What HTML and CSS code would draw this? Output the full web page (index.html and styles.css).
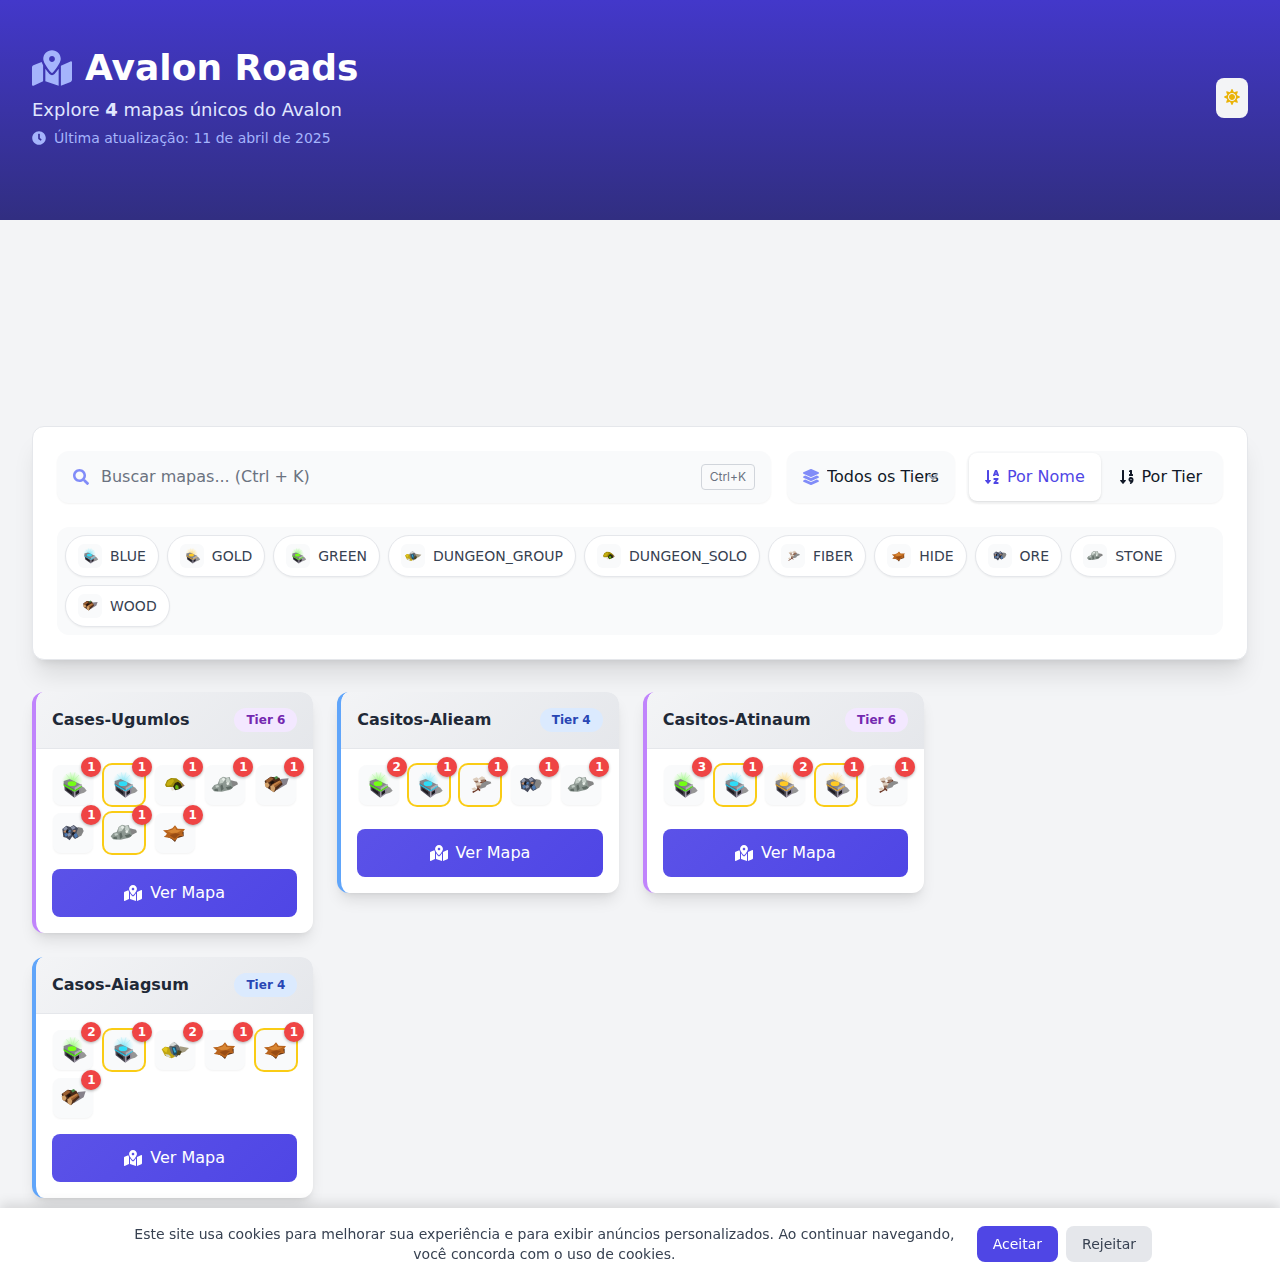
FILE: index.html
```html
<!DOCTYPE html>
<html lang="pt-BR">
<head>
<meta charset="utf-8">
<meta name="viewport" content="width=device-width, initial-scale=1">
<title>Avalon Roads</title>
<link rel="stylesheet" href="styles.css">
</head>
<body>
<svg class="sprite" aria-hidden="true">
  <defs>
    <radialGradient id="glow-green"><stop offset="0" stop-color="#5dff1e" stop-opacity=".6"/><stop offset="1" stop-color="#8dff6a" stop-opacity="0"/></radialGradient>
    <radialGradient id="glow-blue"><stop offset="0" stop-color="#25d8f5" stop-opacity=".6"/><stop offset="1" stop-color="#7be9ff" stop-opacity="0"/></radialGradient>
    <radialGradient id="glow-gold"><stop offset="0" stop-color="#ffc21e" stop-opacity=".6"/><stop offset="1" stop-color="#ffdc7a" stop-opacity="0"/></radialGradient>
    <g id="chest-body">
      <path fill="#969696" d="M78 88 84 62l10 6 7 9-8 6z"/>
      <path fill="#4a4853" d="M34 60 64 80v18L35 76z"/>
      <path fill="#8a8494" d="M64 78 84 66l-3 20-17 12z"/>
      <path fill="#1d1b20" d="M68 81l10-6v9l-10 7zM40 69l18 12v8L40 76z"/>
      <path fill="#85858b" d="M32 48 50 42 87 60 65 74 32 56z"/>
      <path fill="#b0afb6" d="M65 68 84 57l4 4-23 14z"/>
      <path fill="#66656d" d="M32 55 65 73v6L33 62z"/>
    </g>
  </defs>
  <symbol id="map" viewBox="0 0 576 512"><path d="M288 0c-69.59 0-126 56.41-126 126 0 56.26 82.35 158.8 113.9 196.02 6.39 7.54 17.82 7.54 24.2 0C331.65 284.8 414 182.26 414 126 414 56.41 357.59 0 288 0zm0 168c-23.2 0-42-18.8-42-42s18.8-42 42-42 42 18.8 42 42-18.8 42-42 42zM20.12 215.95A32.006 32.006 0 0 0 0 245.66v250.32c0 11.32 11.43 19.06 21.94 14.86L160 448V214.92c-8.84-15.98-16.07-31.54-21.25-46.42L20.12 215.95zM288 359.67c-14.07 0-27.38-6.18-36.51-16.96-19.66-23.2-40.57-49.62-59.49-76.72v182l192 64V266c-18.92 27.09-39.82 53.52-59.49 76.72-9.13 10.77-22.44 16.95-36.51 16.95zm266.06-198.51L416 224v288l139.88-55.95A31.996 31.996 0 0 0 576 426.34V176.02c0-11.32-11.43-19.06-21.94-14.86z"/></symbol>

  <symbol id="green" viewBox="0 0 120 120">
    <ellipse cx="58" cy="48" rx="32" ry="28" fill="url(#glow-green)"/>
    <path stroke="#a9f79a" stroke-width="2" opacity=".6" d="M56 48 40 28M57 46 52 22M59 46 66 22M61 48 78 30"/>
    <use href="#chest-body"/>
    <path fill="#4fe010" d="M32 57 64 75v5L32 62zM65 75 86 62v4L65 80z"/><ellipse cx="57" cy="56" rx="13" ry="7" fill="#73ff14"/>
  </symbol>
  <symbol id="blue" viewBox="0 0 120 120">
    <ellipse cx="58" cy="48" rx="32" ry="28" fill="url(#glow-blue)"/>
    <path stroke="#a5ecf8" stroke-width="2" opacity=".6" d="M56 48 40 28M57 46 52 22M59 46 66 22M61 48 78 30"/>
    <use href="#chest-body"/>
    <path fill="#19c3e6" d="M32 57 64 75v4L32 61zM65 75 86 62v3L65 79z"/><ellipse cx="57" cy="56" rx="13" ry="7" fill="#2fdcf7"/>
  </symbol>
  <symbol id="gold" viewBox="0 0 120 120">
    <ellipse cx="58" cy="48" rx="32" ry="28" fill="url(#glow-gold)"/>
    <path stroke="#ffe3a0" stroke-width="2" opacity=".6" d="M56 48 40 28M57 46 52 22M59 46 66 22M61 48 78 30"/>
    <use href="#chest-body"/>
    <path fill="#e2a01c" d="M32 57 64 75v4L32 61zM65 75 86 62v3L65 79z"/><ellipse cx="57" cy="56" rx="13" ry="7" fill="#ffca24"/>
  </symbol>
  <symbol id="group" viewBox="0 0 120 120">
    <path fill="#a49c82" d="M62 80 74 49l28 5-12 11-13 5z"/>
    <path fill="#bfa514" d="M20 58 30 50l14 2 8 16 8 12-10 5-20-8z"/>
    <path fill="#e2c51c" d="M22 58l10-8 6 6-4 12z"/>
    <path fill="#6a6d6e" d="M42 50 58 36l14 12 6 18-14 16-16-12z"/>
    <path fill="#d5d8d6" d="M42 46 56 35l10 8-12 6zM30 72l12 2 6 8-12-2z"/>
    <path fill="#1b4c66" d="M50 52 62 50 68 72 56 76z"/>
    <path fill="#37a9d5" d="M53 54 58 53 64 67 58 68z"/>
    <path fill="#4c4520" d="M68 60 80 64 75 76 64 75z"/>
  </symbol>
  <symbol id="solo" viewBox="0 0 120 120">
    <path fill="#8d6a58" d="M70 46l12 8 7 8-8 5-12-2z"/>
    <path fill="#a08c08" d="M30 60 36 46 48 39 64 40 78 50 83 63 70 64 62 62 58 66 44 66 34 66z"/>
    <path fill="#c5ae10" d="M34 57 41 46 54 42 57 48 49 59 38 63z"/>
    <path fill="#2b280c" d="M54 66 60 54 69 50 77 56 82 67 72 73 60 76z"/>
    <path fill="#64b20f" d="M60 66 63 59 70 62 71 72 62 73z"/>
    <path fill="#e6e0cf" d="M46 68l8-3 4 10-7 2z"/>
  </symbol>
  <symbol id="fiber" viewBox="0 0 120 120">
    <path fill="#8c8c8c" d="M54 68 72 46l20 4 2 5-14 6-4 6-14 4z"/>
    <path fill="none" stroke="#6f3b2b" stroke-width="5" d="M38 82 54 72 52 58 78 46M54 70l6 7"/>
    <path fill="#ddcdbd" d="M38 42 50 37 57 42 54 49 43 50zM56 40 66 34 75 38 74 46 62 49zM46 55 58 50 65 56 60 65 50 65zM34 71 44 67 51 73 43 78z"/>
    <path fill="#94705c" d="M42 48l12-1 2 5-8 2zM62 45l12-2 2 6-10 4zM50 62l12-1-2 7-8 2z"/>
  </symbol>
  <symbol id="hide" viewBox="0 0 120 120">
    <path fill="#5d3115" d="M26 72 38 72 50 78 60 87 66 76 86 70 86 56 66 52z"/>
    <path fill="#b9641d" d="M24 52 38 51 52 46 60 37 68 47 90 48 82 59 85 69 72 70 60 83 48 76 28 72 36 62z"/>
    <path fill="#d98632" d="M36 54 52 50 60 42 64 51 80 52 66 59 48 60z"/>
    <path fill="#984c14" d="M44 66 62 61 76 63 68 68 60 77 50 71z"/>
  </symbol>
  <symbol id="ore" viewBox="0 0 120 120">
    <path fill="#858585" d="M60 73 74 42l14 3 4 9-7 14-14 6z"/>
    <path fill="#454a5a" d="M28 48 40 38 52 42 62 36 75 46 70 60 77 72 66 78 58 70 50 82 40 74 31 72z"/>
    <path fill="#8b93a8" d="M30 47 40 40 44 48 36 54zM53 43l9-5 6 7-10 5zM42 63l9-4 4 7-9 5z"/>
    <path fill="#4f7bb3" d="M62 64 70 60 75 70 67 76zM34 62l8-2 2 8-7 3zM47 50l7 2-2 7-7-2z"/>
    <path fill="#bd8a68" d="M31 55l9-4 3 5-7 4zM58 53l8-3 3 4-6 4z"/>
    <path fill="#181b24" d="M42 49l5 2-3 9-6-2zM56 64l4-7 6 3-5 7z"/>
  </symbol>
  <symbol id="stone" viewBox="0 0 120 120">
    <path fill="#858585" d="M70 76 78 46l18 4 3 8-14 7-7 8z"/>
    <path fill="#8c9791" d="M20 70 28 60 38 57 44 42 54 35 65 38 74 36 80 54 84 68 72 75 50 80 27 79z"/>
    <path fill="#c3cdc6" d="M44 44 54 37 62 42 54 53 43 56zM64 40l8-2 4 14-8 4-5-6zM31 62l9-2 2 6-9 2z"/>
    <path fill="#e6ece7" d="M50 42l6-4 5 5-6 6zM64 54l6-3 4 7-8 3z"/>
    <path fill="#5f6b65" d="M46 62 52 58 56 72 48 78zM62 67l16-4 4 6-14 5zM28 72l10-1 2 8-11-1z"/>
  </symbol>
  <symbol id="wood" viewBox="0 0 120 120">
    <path fill="#86818a" d="M62 76 74 42l24-2-6 18-14 8z"/>
    <path fill="#4a2a18" d="M26 48 44 35 70 38 80 58 54 82 30 66z"/>
    <path fill="#9a5e2f" d="M28 47 44 36 53 41 36 54zM46 60 72 46 78 52 55 70z"/>
    <path fill="#c28045" d="M49 59 70 47 74 50 52 64z"/>
    <path fill="#d1a069" d="M26 54l9-2 6 8-5 9-8-4zM43 63l9-3 6 9-4 13-10-6z"/>
    <path fill="#1e120c" d="M42 52l8-5 6 4-10 8z"/>
    <path fill="#4b8a4a" d="M54 37l9-4 4 5-8 6z"/>
  </symbol>
</svg>

<header class="hero">
  <div class="hero-inner">
    <div class="hero-text">
      <h1 class="hero-title"><svg class="icon-title" aria-hidden="true"><use href="#map"/></svg>Avalon Roads</h1>
      <p class="hero-lead">Explore <strong>4</strong> mapas únicos do Avalon</p>
      <p class="hero-date">
        <svg class="icon-clock" viewBox="0 0 512 512" aria-hidden="true"><path d="M256,8C119,8,8,119,8,256S119,504,256,504,504,393,504,256,393,8,256,8Zm92.49,313h0l-20,25a16,16,0,0,1-22.49,2.5h0l-67-49.72a40,40,0,0,1-15-31.23V112a16,16,0,0,1,16-16h32a16,16,0,0,1,16,16V256l58,42.5A16,16,0,0,1,348.49,321Z"/></svg>
        Última atualização: 11 de abril de 2025
      </p>
    </div>
    <button class="theme-toggle" type="button" aria-label="Alternar tema">
      <svg class="icon" viewBox="0 0 512 512" aria-hidden="true"><path d="M256 160c-52.9 0-96 43.1-96 96s43.1 96 96 96 96-43.1 96-96-43.1-96-96-96zm246.4 80.5l-94.7-47.3 33.5-100.4c4.5-13.6-8.4-26.5-21.9-21.9l-100.4 33.5-47.4-94.8c-6.4-12.8-24.6-12.8-31 0l-47.3 94.7L92.7 70.8c-13.6-4.5-26.5 8.4-21.9 21.9l33.5 100.4-94.7 47.4c-12.8 6.4-12.8 24.6 0 31l94.7 47.3-33.5 100.5c-4.5 13.6 8.4 26.5 21.9 21.9l100.4-33.5 47.3 94.7c6.4 12.8 24.6 12.8 31 0l47.3-94.7 100.4 33.5c13.6 4.5 26.5-8.4 21.9-21.9l-33.5-100.4 94.7-47.3c13-6.5 13-24.7.2-31.1zm-155.9 106c-49.9 49.9-131.1 49.9-181 0-49.9-49.9-49.9-131.1 0-181 49.9-49.9 131.1-49.9 181 0 49.9 49.9 49.9 131.1 0 181z"/></svg>
    </button>
  </div>
</header>

<main class="page">
  <section class="panel" aria-label="Filtros">
    <div class="toolbar">
      <label class="search">
        <svg class="icon" viewBox="0 0 512 512" aria-hidden="true"><path d="M505 442.7L405.3 343c-4.5-4.5-10.6-7-17-7H372c27.6-35.3 44-79.7 44-128C416 93.1 322.9 0 208 0S0 93.1 0 208s93.1 208 208 208c48.3 0 92.7-16.4 128-44v16.3c0 6.4 2.5 12.5 7 17l99.7 99.7c9.4 9.4 24.6 9.4 33.9 0l28.3-28.3c9.4-9.4 9.4-24.6.1-34zM208 336c-70.7 0-128-57.2-128-128 0-70.7 57.2-128 128-128 70.7 0 128 57.2 128 128 0 70.7-57.2 128-128 128z"/></svg>
        <input class="search-input" type="text" placeholder="Buscar mapas... (Ctrl + K)" aria-label="Buscar mapas">
        <kbd class="shortcut">Ctrl+K</kbd>
      </label>
      <div class="toolbar-side">
        <label class="tier">
          <svg class="icon" viewBox="0 0 512 512" aria-hidden="true"><path d="M12.41 148.02l232.94 105.67c6.8 3.09 14.49 3.09 21.29 0l232.94-105.67c16.55-7.51 16.55-32.52 0-40.03L266.65 2.31a25.607 25.607 0 0 0-21.29 0L12.41 107.98c-16.55 7.51-16.55 32.53 0 40.04zm487.18 88.28l-58.09-26.33-161.64 73.27c-7.56 3.43-15.59 5.17-23.86 5.17s-16.29-1.74-23.86-5.17L70.51 209.97l-58.1 26.33c-16.55 7.5-16.55 32.5 0 40l232.94 105.59c6.8 3.08 14.49 3.08 21.29 0L499.59 276.3c16.55-7.5 16.55-32.5 0-40zm0 127.8l-57.87-26.23-161.86 73.37c-7.56 3.43-15.59 5.17-23.86 5.17s-16.29-1.74-23.86-5.17L70.29 337.87 12.41 364.1c-16.55 7.5-16.55 32.5 0 40l232.94 105.59c6.8 3.08 14.49 3.08 21.29 0L499.59 404.1c16.55-7.5 16.55-32.5 0-40z"/></svg>
          <select class="tier-select" aria-label="Tier"><option>Todos os Tiers</option><option>Tier 4</option><option>Tier 6</option></select>
          <svg class="tier-chevron" viewBox="0 0 12 12" aria-hidden="true"><path d="M2 4l4 4 4-4"/></svg>
        </label>
        <div class="sort" role="group" aria-label="Ordenar">
          <button class="sort-btn sort-btn-active" type="button"><svg class="icon-sort" viewBox="0 0 448 512" aria-hidden="true"><path d="M176 352h-48V48a16 16 0 0 0-16-16H80a16 16 0 0 0-16 16v304H16c-14.19 0-21.36 17.24-11.29 27.31l80 96a16 16 0 0 0 22.62 0l80-96C197.35 369.26 190.22 352 176 352zm240-64H288a16 16 0 0 0-16 16v32a16 16 0 0 0 16 16h56l-61.26 70.45A32 32 0 0 0 272 446.37V464a16 16 0 0 0 16 16h128a16 16 0 0 0 16-16v-32a16 16 0 0 0-16-16h-56l61.26-70.45A32 32 0 0 0 432 321.63V304a16 16 0 0 0-16-16zm31.06-85.38l-59.27-160A16 16 0 0 0 372.72 32h-41.44a16 16 0 0 0-15.07 10.62l-59.27 160A16 16 0 0 0 272 224h24.83a16 16 0 0 0 15.23-11.08l4.42-12.92h71l4.41 12.92A16 16 0 0 0 407.16 224H432a16 16 0 0 0 15.06-21.38zM335.61 144L352 96l16.39 48z"/></svg>Por Nome</button>
          <button class="sort-btn" type="button"><svg class="icon-sort" viewBox="0 0 448 512" aria-hidden="true"><path d="M304 96h16v64h-16a16 16 0 0 0-16 16v32a16 16 0 0 0 16 16h96a16 16 0 0 0 16-16v-32a16 16 0 0 0-16-16h-16V48a16 16 0 0 0-16-16h-48a16 16 0 0 0-14.29 8.83l-16 32A16 16 0 0 0 304 96zm26.15 162.91a79 79 0 0 0-55 54.17c-14.25 51.05 21.21 97.77 68.85 102.53a84.07 84.07 0 0 1-20.85 12.91c-7.57 3.4-10.8 12.47-8.18 20.34l9.9 20c2.87 8.63 12.53 13.49 20.9 9.91 58-24.76 86.25-61.61 86.25-132V336c-.02-51.21-48.4-91.34-101.85-77.09zM352 356a20 20 0 1 1 20-20 20 20 0 0 1-20 20zm-176-4h-48V48a16 16 0 0 0-16-16H80a16 16 0 0 0-16 16v304H16c-14.19 0-21.36 17.24-11.29 27.31l80 96a16 16 0 0 0 22.62 0l80-96C197.35 369.26 190.22 352 176 352z"/></svg>Por Tier</button>
        </div>
      </div>
    </div>
    <div class="chips">
      <button class="chip" type="button"><svg class="chip-icon" aria-hidden="true"><use href="#blue"/></svg>BLUE</button>
      <button class="chip" type="button"><svg class="chip-icon" aria-hidden="true"><use href="#gold"/></svg>GOLD</button>
      <button class="chip" type="button"><svg class="chip-icon" aria-hidden="true"><use href="#green"/></svg>GREEN</button>
      <button class="chip" type="button"><svg class="chip-icon" aria-hidden="true"><use href="#group"/></svg>DUNGEON_GROUP</button>
      <button class="chip" type="button"><svg class="chip-icon" aria-hidden="true"><use href="#solo"/></svg>DUNGEON_SOLO</button>
      <button class="chip" type="button"><svg class="chip-icon" aria-hidden="true"><use href="#fiber"/></svg>FIBER</button>
      <button class="chip" type="button"><svg class="chip-icon" aria-hidden="true"><use href="#hide"/></svg>HIDE</button>
      <button class="chip" type="button"><svg class="chip-icon" aria-hidden="true"><use href="#ore"/></svg>ORE</button>
      <button class="chip" type="button"><svg class="chip-icon" aria-hidden="true"><use href="#stone"/></svg>STONE</button>
      <button class="chip" type="button"><svg class="chip-icon" aria-hidden="true"><use href="#wood"/></svg>WOOD</button>
    </div>
  </section>

  <div class="content">
    <div class="cards">
      <article class="card card-t6">
        <div class="card-head"><h2 class="card-title">Cases-Ugumlos</h2><span class="tag tag-t6">Tier 6</span></div>
        <div class="card-body">
          <div class="items">
            <div class="item"><svg class="item-icon"><use href="#green"/></svg><span class="count">1</span></div>
            <div class="item item-big"><svg class="item-icon"><use href="#blue"/></svg><span class="count">1</span></div>
            <div class="item"><svg class="item-icon"><use href="#solo"/></svg><span class="count">1</span></div>
            <div class="item"><svg class="item-icon"><use href="#stone"/></svg><span class="count">1</span></div>
            <div class="item"><svg class="item-icon"><use href="#wood"/></svg><span class="count">1</span></div>
            <div class="item"><svg class="item-icon"><use href="#ore"/></svg><span class="count">1</span></div>
            <div class="item item-big"><svg class="item-icon"><use href="#stone"/></svg><span class="count">1</span></div>
            <div class="item"><svg class="item-icon"><use href="#hide"/></svg><span class="count">1</span></div>
          </div>
          <a class="view" href="#"><svg class="icon-map" aria-hidden="true"><use href="#map"/></svg>Ver Mapa</a>
        </div>
      </article>
      <article class="card card-t4">
        <div class="card-head"><h2 class="card-title">Casitos-Alieam</h2><span class="tag tag-t4">Tier 4</span></div>
        <div class="card-body">
          <div class="items">
            <div class="item"><svg class="item-icon"><use href="#green"/></svg><span class="count">2</span></div>
            <div class="item item-big"><svg class="item-icon"><use href="#blue"/></svg><span class="count">1</span></div>
            <div class="item item-big"><svg class="item-icon"><use href="#fiber"/></svg><span class="count">1</span></div>
            <div class="item"><svg class="item-icon"><use href="#ore"/></svg><span class="count">1</span></div>
            <div class="item"><svg class="item-icon"><use href="#stone"/></svg><span class="count">1</span></div>
          </div>
          <a class="view" href="#"><svg class="icon-map" aria-hidden="true"><use href="#map"/></svg>Ver Mapa</a>
        </div>
      </article>
      <article class="card card-t6">
        <div class="card-head"><h2 class="card-title">Casitos-Atinaum</h2><span class="tag tag-t6">Tier 6</span></div>
        <div class="card-body">
          <div class="items">
            <div class="item"><svg class="item-icon"><use href="#green"/></svg><span class="count">3</span></div>
            <div class="item item-big"><svg class="item-icon"><use href="#blue"/></svg><span class="count">1</span></div>
            <div class="item"><svg class="item-icon"><use href="#gold"/></svg><span class="count">2</span></div>
            <div class="item item-big"><svg class="item-icon"><use href="#gold"/></svg><span class="count">1</span></div>
            <div class="item"><svg class="item-icon"><use href="#fiber"/></svg><span class="count">1</span></div>
          </div>
          <a class="view" href="#"><svg class="icon-map" aria-hidden="true"><use href="#map"/></svg>Ver Mapa</a>
        </div>
      </article>
      <article class="card card-t4">
        <div class="card-head"><h2 class="card-title">Casos-Aiagsum</h2><span class="tag tag-t4">Tier 4</span></div>
        <div class="card-body">
          <div class="items">
            <div class="item"><svg class="item-icon"><use href="#green"/></svg><span class="count">2</span></div>
            <div class="item item-big"><svg class="item-icon"><use href="#blue"/></svg><span class="count">1</span></div>
            <div class="item"><svg class="item-icon"><use href="#group"/></svg><span class="count">2</span></div>
            <div class="item"><svg class="item-icon"><use href="#hide"/></svg><span class="count">1</span></div>
            <div class="item item-big"><svg class="item-icon"><use href="#hide"/></svg><span class="count">1</span></div>
            <div class="item"><svg class="item-icon"><use href="#wood"/></svg><span class="count">1</span></div>
          </div>
          <a class="view" href="#"><svg class="icon-map" aria-hidden="true"><use href="#map"/></svg>Ver Mapa</a>
        </div>
      </article>
    </div>
    <aside class="aside"></aside>
  </div>
</main>

<div class="cookies">
  <div class="cookies-inner">
    <p class="cookies-text">Este site usa cookies para melhorar sua experiência e para exibir anúncios personalizados. Ao continuar navegando, você concorda com o uso de cookies.</p>
    <div class="cookies-actions">
      <button class="btn btn-primary" type="button">Aceitar</button>
      <button class="btn" type="button">Rejeitar</button>
    </div>
  </div>
</div>
</body>
</html>
```
FILE: styles.css
```css
* { box-sizing: border-box; margin: 0; }

body {
  background: #f3f4f6;
  color: #111827;
  font: 16px/24px "DejaVu Sans", sans-serif;
  padding-bottom: 72px;
}

button, input, select { font: inherit; color: inherit; border: 0; background: none; padding: 0; }
button { cursor: pointer; }
svg { display: block; flex: none; fill: currentColor; }

.sprite { position: absolute; width: 0; height: 0; }
.icon { width: 16px; height: 16px; }
.icon-title { width: 40px; height: 36px; color: #a5b4fc; }
.icon-clock { width: 14px; height: 14px; }
.icon-sort { width: 14px; height: 16px; }
.icon-map { width: 18px; height: 16px; }

/* Header */
.hero { background: linear-gradient(#4338ca, #312e81); padding: 48px 32px 72px; }
.hero-inner { display: flex; justify-content: space-between; align-items: center; }
.hero-title { display: flex; align-items: center; gap: 13px; font-size: 36px; line-height: 40px; color: #fff; margin-bottom: 8px; }
.hero-lead { font-size: 18px; line-height: 28px; color: #e0e7ff; margin-bottom: 4px; }
.hero-date { display: flex; align-items: center; gap: 8px; font-size: 14px; line-height: 20px; color: #a5b4fc; }
.theme-toggle { padding: 11px 8px 13px; border-radius: 8px; background: #f3f4f6; color: #eab308; }

/* Filters */
.page { padding: 206px 32px 24px; }
.panel {
  background: #fff;
  border: 1px solid #e5e7eb;
  border-radius: 12px;
  padding: 24px;
  margin-bottom: 32px;
  box-shadow: 0 20px 25px -5px rgba(0, 0, 0, .1), 0 8px 10px -6px rgba(0, 0, 0, .1);
}
.toolbar { display: flex; gap: 16px; margin-bottom: 24px; }
.toolbar-side { display: flex; gap: 12px; }
.search, .tier, .sort { display: flex; align-items: center; height: 52px; border-radius: 12px; background: #f9fafb; box-shadow: 0 1px 2px rgba(0, 0, 0, .05); }
.search { flex: 1; min-width: 0; gap: 12px; padding: 0 16px; color: #818cf8; }
.search-input { flex: 1; min-width: 0; height: 24px; color: #111827; outline: 0; }
.search-input::placeholder { color: #6b7280; opacity: 1; }
.shortcut { font: 12px/16px Inter, sans-serif; color: #6b7280; border: 1px solid #d1d5db; border-radius: 4px; padding: 4px 8px; }
.tier { position: relative; width: 168px; gap: 8px; padding-left: 16px; color: #818cf8; }
.tier-select { flex: 1; min-width: 0; height: 24px; appearance: none; color: #111827; outline: 0; }
.tier-chevron { position: absolute; right: 16px; top: 20px; width: 12px; height: 12px; fill: none; stroke: #9ca3af; stroke-width: 2; }
.sort { width: 256px; padding: 2px; }
.sort-btn { display: flex; flex: 1 1 auto; justify-content: center; align-items: center; gap: 8px; height: 48px; border-radius: 8px; }
.sort-btn-active { flex: none; padding: 0 16px; background: #fff; color: #4f46e5; box-shadow: 0 1px 3px rgba(0, 0, 0, .1), 0 1px 2px -1px rgba(0, 0, 0, .1); }
.chips { display: flex; flex-wrap: wrap; gap: 8px; padding: 8px; border-radius: 12px; background: #f9fafb; }
.chip { display: flex; align-items: center; gap: 8px; padding: 8px 12px; border: 1px solid #e5e7eb; border-radius: 21px; background: #fff; color: #374151; font-size: 14px; line-height: 24px; box-shadow: 0 1px 2px rgba(0, 0, 0, .05); }
.chip-icon { width: 24px; height: 24px; border-radius: 6px; background: #f9fafb; }

/* Map cards */
.content { display: grid; grid-template-columns: minmax(0, 1fr) 300px; gap: 24px; }
.cards { display: grid; grid-template-columns: repeat(3, minmax(0, 1fr)); gap: 24px; align-items: start; }
.card { overflow: hidden; border-left: 4px solid; border-radius: 12px; background: #fff; box-shadow: 0 10px 15px -3px rgba(0, 0, 0, .1), 0 4px 6px -4px rgba(0, 0, 0, .1); }
.card-t4 { border-color: #60a5fa; }
.card-t6 { border-color: #c084fc; }
.card-head { display: flex; justify-content: space-between; align-items: center; padding: 16px; border-bottom: 1px solid #e5e7eb; background: linear-gradient(135deg, #f3f4f6, #e5e7eb); }
.card-title { font-size: 16px; line-height: 24px; color: #1f2937; }
.tag { padding: 4px 12px; border-radius: 12px; font-size: 12px; line-height: 16px; font-weight: 700; }
.tag-t4 { background: #dbeafe; color: #2846b4; }
.tag-t6 { background: #f3e8ff; color: #7429b0; }
.card-body { padding: 16px; }
.items { display: grid; grid-template-columns: repeat(5, minmax(0, 1fr)); gap: 8px; justify-items: center; align-content: start; min-height: 48px; margin-bottom: 16px; }
.item { position: relative; width: 40px; height: 40px; border-radius: 8px; background: #f9fafb; box-shadow: 0 1px 2px rgba(0, 0, 0, .05); }
.item-big { box-shadow: 0 0 0 2px #facc15; }
.item-icon { width: 40px; height: 40px; }
.count { position: absolute; top: -8px; right: -8px; width: 20px; height: 20px; border-radius: 10px; background: #ef4444; color: #fff; font-size: 12px; line-height: 20px; font-weight: 700; text-align: center; box-shadow: 0 1px 3px rgba(0, 0, 0, .3); }
.view { display: flex; justify-content: center; align-items: center; gap: 8px; padding: 12px 16px; border-radius: 8px; background: linear-gradient(135deg, #5b52e8, #4f46e5); color: #fff; text-decoration: none; }

/* Cookie notice */
.cookies { position: fixed; left: 0; right: 0; bottom: 0; padding: 16px; background: #fff; box-shadow: 0 -4px 12px rgba(0, 0, 0, .12); }
.cookies-inner { display: flex; align-items: center; gap: 16px; max-width: 1024px; margin: 0 auto; font-size: 14px; line-height: 20px; color: #374151; }
.cookies-text { flex: 1; text-align: center; }
.cookies-actions { display: flex; gap: 8px; }
.btn { padding: 8px 16px; border-radius: 8px; background: #e5e7eb; color: #374151; }
.btn-primary { background: #4f46e5; color: #fff; }
```
